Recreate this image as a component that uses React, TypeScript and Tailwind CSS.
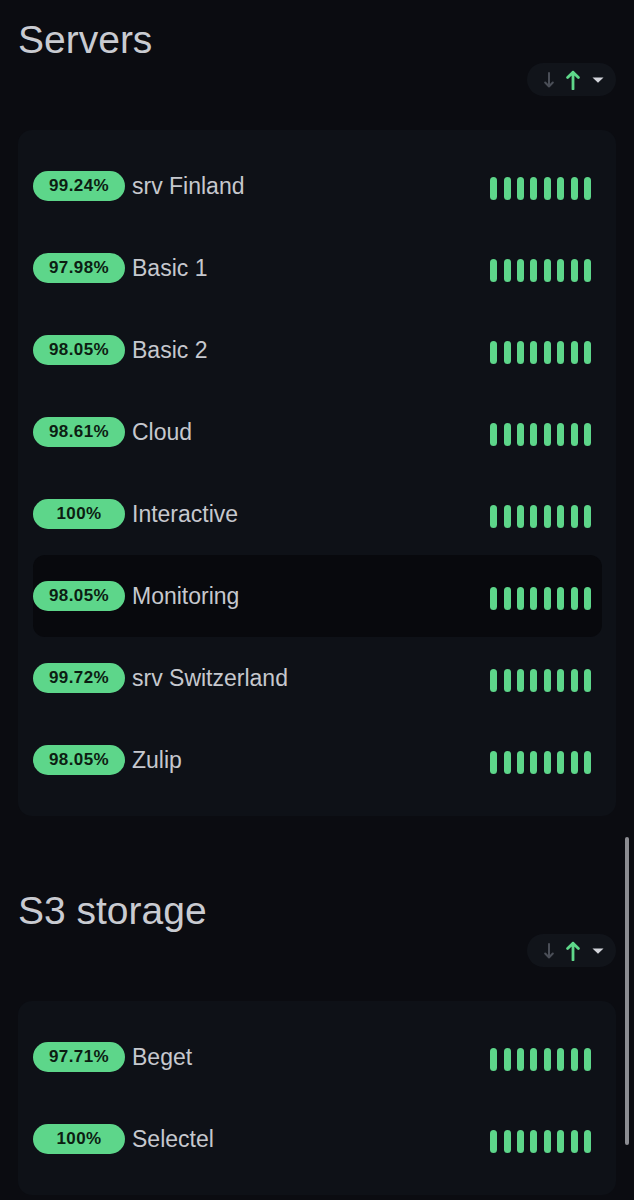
import React from "react";

type Item = {
  uptime: string;
  name: string;
  active?: boolean;
};

const servers: Item[] = [
  { uptime: "99.24%", name: "srv Finland" },
  { uptime: "97.98%", name: "Basic 1" },
  { uptime: "98.05%", name: "Basic 2" },
  { uptime: "98.61%", name: "Cloud" },
  { uptime: "100%", name: "Interactive" },
  { uptime: "98.05%", name: "Monitoring", active: true },
  { uptime: "99.72%", name: "srv Switzerland" },
  { uptime: "98.05%", name: "Zulip" },
];

const storage: Item[] = [
  { uptime: "97.71%", name: "Beget" },
  { uptime: "100%", name: "Selectel" },
];

function SortControl() {
  return (
    <div className="flex h-[33px] items-center gap-[12px] rounded-full bg-[#11141a] pl-[17px] pr-[12px]">
      {/* down arrow */}
      <svg width="10" height="16" viewBox="0 0 10 16" fill="none">
        <path
          d="M5 1v13.5M1.2 10.5L5 14.5l3.8-4"
          stroke="#4a4e57"
          strokeWidth="2"
          strokeLinecap="round"
          strokeLinejoin="round"
        />
      </svg>
      {/* up arrow */}
      <svg width="14" height="20" viewBox="0 0 14 20" fill="none">
        <path
          d="M7 19V2.2M1.6 7.6L7 2.2l5.4 5.4"
          stroke="#5fd88a"
          strokeWidth="2.8"
          strokeLinecap="round"
          strokeLinejoin="round"
        />
      </svg>
      {/* caret */}
      <svg width="12" height="6" viewBox="0 0 12 6">
        <path d="M0.5 0.5h11L6 5.8z" fill="#d3d5db" />
      </svg>
    </div>
  );
}

function Bars() {
  return (
    <div className="flex items-center gap-[6.4px] pt-[5px]">
      {Array.from({ length: 8 }).map((_, i) => (
        <span
          key={i}
          className="block h-[23px] w-[7px] rounded-full bg-[#5dd68a]"
        />
      ))}
    </div>
  );
}

function Row({ item }: { item: Item }) {
  return (
    <div
      className={`flex h-[82px] items-center rounded-[12px] pr-[11px] ${
        item.active ? "bg-[#08090d]" : ""
      }`}
    >
      <span className="flex h-[30px] w-[92px] items-center justify-center rounded-full bg-[#5dd68a] text-[17px] font-bold tracking-[0.4px] text-[#0c1d12]">
        {item.uptime}
      </span>
      <span className="ml-[7px] text-[23px] text-[#c6c8ce]">{item.name}</span>
      <div className="ml-auto">
        <Bars />
      </div>
    </div>
  );
}

function Section({ title, items }: { title: string; items: Item[] }) {
  return (
    <section className="flex flex-col">
      <h2 className="text-[39px] leading-[39px] text-[#c9cbd1]">{title}</h2>

      <div className="mt-[4px] flex justify-end">
        <SortControl />
      </div>

      <div className="mt-[34px] rounded-[14px] bg-[#0e1117] pb-[15px] pl-[15px] pr-[14px] pt-[15px]">
        {items.map((item) => (
          <Row key={item.name} item={item} />
        ))}
      </div>
    </section>
  );
}

export default function App() {
  return (
    <div
      className="relative h-[1200px] overflow-hidden bg-[#0b0c11] px-[18px] pt-[20px]"
      style={{ fontFamily: '"Liberation Sans", Arial, sans-serif' }}
    >
      <div className="flex flex-col gap-[75px]">
        <Section title="Servers" items={servers} />
        <Section title="S3 storage" items={storage} />
      </div>

      {/* overlay scrollbar */}
      <div className="absolute right-[5px] top-[837px] h-[308px] w-[4px] rounded-full bg-[#8c8d92]" />
    </div>
  );
}
